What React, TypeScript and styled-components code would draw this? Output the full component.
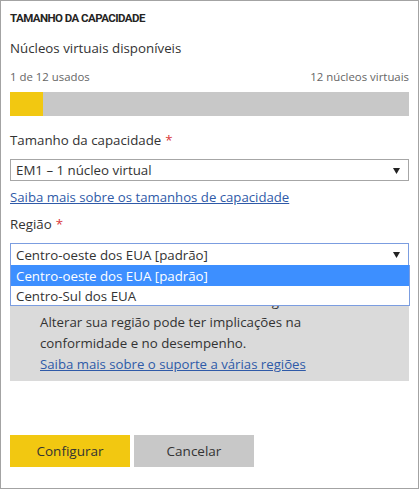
import React from "react";
import styled, { createGlobalStyle } from "styled-components";

const Global = createGlobalStyle`
  html, body { margin: 0; padding: 0; background: #fff; }
  body { font-family: "Open Sans", "Noto Sans", sans-serif; color: #333; }
  * { box-sizing: border-box; }
`;

const Panel = styled.div`
  width: 419px;
  height: 489px;
  border: 1px solid #a3a3a3;
  padding: 8px 9px 0 9px;
  display: flex;
  flex-direction: column;
`;

const Title = styled.div`
  font-family: Roboto, "Liberation Sans", sans-serif;
  font-weight: 700;
  font-size: 11.5px;
  line-height: 18px;
  color: #252423;
  letter-spacing: -0.55px;
`;

const Heading = styled.div<{ $mt: number }>`
  margin-top: ${(p) => p.$mt}px;
  font-size: 13.3px;
  line-height: 20px;
  color: #333;
`;

const Star = styled.span`
  color: #d9383a;
  margin-left: 4px;
`;

const UsageRow = styled.div`
  margin-top: 11px;
  display: flex;
  justify-content: space-between;
  font-size: 11.4px;
  line-height: 16px;
  color: #666;
`;

const Bar = styled.div`
  margin-top: 7px;
  height: 24px;
  background: #c8c8c8;
  display: flex;
`;

const BarFill = styled.div`
  background: #f2c811;
  height: 100%;
`;

const SelectBox = styled.div<{ $focused?: boolean; $mt: number }>`
  position: relative;
  margin-top: ${(p) => p.$mt}px;
  height: ${(p) => (p.$focused ? 23 : 22)}px;
  border: 1px solid ${(p) => (p.$focused ? "#7b9de0" : "#a6a6a6")};
  display: flex;
  align-items: center;
  padding: 0 8px 0 5px;
  font-size: 13.3px;
  color: #333;
  background: #fff;
`;

const SelectText = styled.span`
  flex: 1;
  line-height: 20px;
`;

const Arrow = styled.svg`
  width: 7px;
  height: 7px;
  flex: none;
`;

const Link = styled.a<{ $mt?: number }>`
  display: block;
  margin-top: ${(p) => p.$mt ?? 0}px;
  font-size: 13.2px;
  line-height: 20px;
  color: #2f5aa8;
  text-decoration: underline;
`;

const Dropdown = styled.div`
  position: absolute;
  left: -1px;
  top: 100%;
  width: 400px;
  border: 1px solid #7b9de0;
  border-top: none;
  background: #fff;
  z-index: 2;
`;

const Option = styled.div<{ $active?: boolean }>`
  height: ${(p) => (p.$active ? 21 : 19)}px;
  padding-left: 5px;
  display: flex;
  align-items: center;
  font-size: 13.3px;
  background: ${(p) => (p.$active ? "#3d8fff" : "#fff")};
  color: ${(p) => (p.$active ? "#fff" : "#333")};
`;

const InfoBox = styled.div`
  margin-top: 17px;
  background: #dadada;
  padding: 8px 10px 7px 30px;
  font-size: 13.3px;
  line-height: 21px;
  color: #333;
`;

const Buttons = styled.div`
  margin-top: 54px;
  display: flex;
  gap: 4px;
`;

const Button = styled.button<{ $primary?: boolean }>`
  width: 120px;
  height: 32px;
  border: none;
  font-family: "Open Sans", "Noto Sans", sans-serif;
  font-size: 13.5px;
  color: #333;
  background: ${(p) => (p.$primary ? "#f2c811" : "#c8c8c8")};
  padding: 0;
`;

const DownArrow = () => (
  <Arrow viewBox="0 0 7 7">
    <polygon points="0,1 7,1 3.5,7" fill="#222" />
  </Arrow>
);

export default function App() {
  const used = 1;
  const total = 12;
  return (
    <>
      <Global />
      <Panel>
        <Title>TAMANHO DA CAPACIDADE</Title>
        <Heading $mt={11}>Núcleos virtuais disponíveis</Heading>
        <UsageRow>
          <span>1 de 12 usados</span>
          <span>12 núcleos virtuais</span>
        </UsageRow>
        <Bar>
          <BarFill style={{ width: `${(used / total) * 100}%` }} />
        </Bar>
        <Heading $mt={14}>
          Tamanho da capacidade<Star>*</Star>
        </Heading>
        <SelectBox $mt={9}>
          <SelectText>EM1 – 1 núcleo virtual</SelectText>
          <DownArrow />
        </SelectBox>
        <Link $mt={6}>Saiba mais sobre os tamanhos de capacidade</Link>
        <Heading $mt={7}>
          Região<Star>*</Star>
        </Heading>
        <SelectBox $mt={9} $focused>
          <SelectText>Centro-oeste dos EUA [padrão]</SelectText>
          <DownArrow />
          <Dropdown>
            <Option $active>Centro-oeste dos EUA [padrão]</Option>
            <Option>Centro-Sul dos EUA</Option>
          </Dropdown>
        </SelectBox>
        <InfoBox>
          <div>Seus dados serão armazenados na região selecionada.</div>
          <div>Alterar sua região pode ter implicações na</div>
          <div>conformidade e no desempenho.</div>
          <Link>Saiba mais sobre o suporte a várias regiões</Link>
        </InfoBox>
        <Buttons>
          <Button $primary>Configurar</Button>
          <Button>Cancelar</Button>
        </Buttons>
      </Panel>
    </>
  );
}
